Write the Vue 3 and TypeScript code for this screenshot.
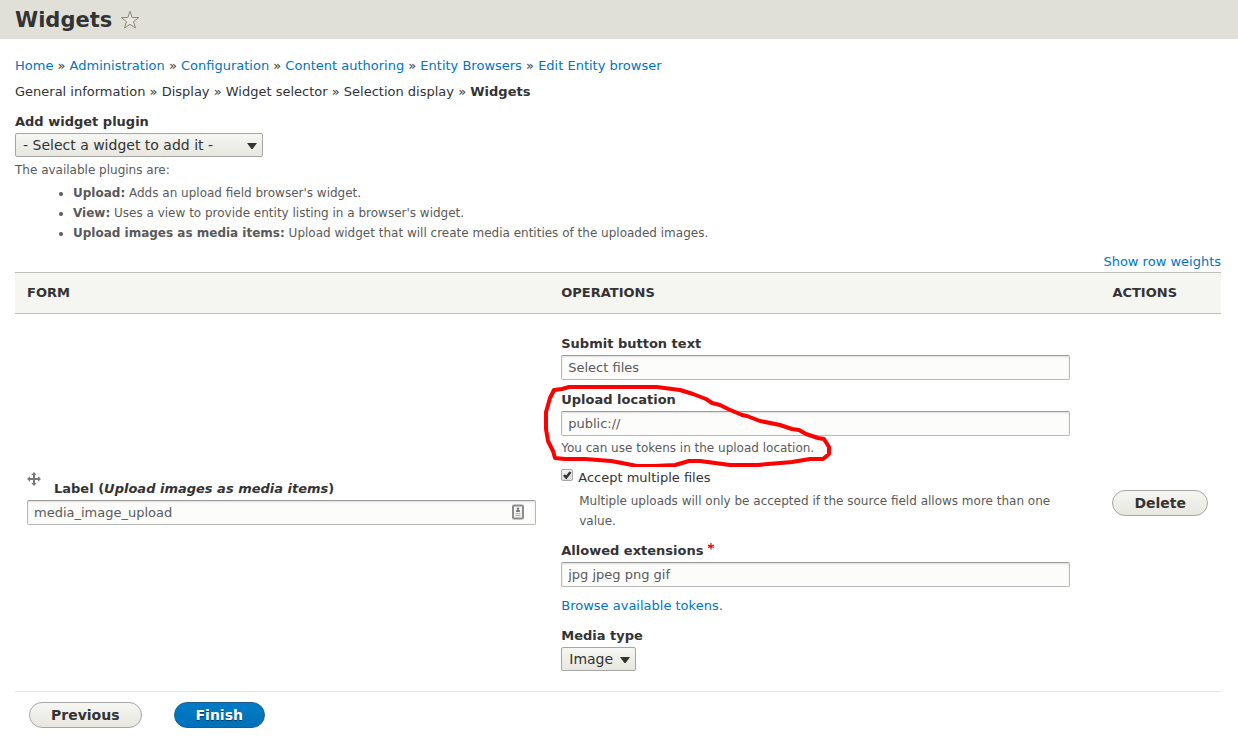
<script setup lang="ts">
import { ref } from 'vue'

interface Plugin {
  name: string
  summary: string
}

const crumbs: string[] = [
  'Home',
  'Administration',
  'Configuration',
  'Content authoring',
  'Entity Browsers',
  'Edit Entity browser',
]

const steps: string[] = ['General information', 'Display', 'Widget selector', 'Selection display']

const plugins: Plugin[] = [
  { name: 'Upload', summary: "Adds an upload field browser's widget." },
  { name: 'View', summary: "Uses a view to provide entity listing in a browser's widget." },
  {
    name: 'Upload images as media items',
    summary: 'Upload widget that will create media entities of the uploaded images.',
  },
]

const widgetPlugin = ref('')
const label = ref('media_image_upload')
const submitText = ref('Select files')
const uploadLocation = ref('public://')
const multiple = ref(true)
const extensions = ref('jpg jpeg png gif')
const mediaType = ref('image')
</script>

<template>
  <div class="page">
    <header class="header">
      <h1>Widgets</h1>
      <button type="button" class="star" aria-label="Add to shortcuts">
        <svg width="20" height="20" viewBox="0 0 20 20">
          <path
            d="M10 1.2 L12.1 7.5 L18.7 7.6 L13.5 11.6 L15.4 18 L10 14.3 L4.6 18 L6.5 11.6 L1.3 7.6 L7.9 7.5 Z"
            fill="#e8e8e1"
            stroke="#8b8973"
            stroke-width="1"
            stroke-linejoin="round"
          />
        </svg>
      </button>
    </header>

    <main class="content">
      <nav class="trail" aria-label="Breadcrumb">
        <template v-for="(crumb, i) in crumbs" :key="crumb">
          <template v-if="i > 0"> » </template><a href="#">{{ crumb }}</a>
        </template>
      </nav>
      <div class="trail steps">
        <template v-for="step in steps" :key="step">{{ step }} » </template><strong>Widgets</strong>
      </div>

      <form @submit.prevent>
        <div class="item">
          <label for="plugin">Add widget plugin</label>
          <span class="select wide">
            <select id="plugin" v-model="widgetPlugin">
              <option value="">- Select a widget to add it -</option>
              <option v-for="p in plugins" :key="p.name" :value="p.name">{{ p.name }}</option>
            </select>
            <svg width="10" height="6" viewBox="0 0 10 6"><path d="M0 0H10L5.6 6H4.4Z" fill="#333" /></svg>
          </span>
          <div class="description">
            The available plugins are:
            <ul>
              <li v-for="p in plugins" :key="p.name"><strong>{{ p.name }}:</strong> {{ p.summary }}</li>
            </ul>
          </div>
        </div>

        <div class="weights"><a href="#">Show row weights</a></div>

        <table>
          <colgroup>
            <col class="col-form" />
            <col class="col-operations" />
            <col />
          </colgroup>
          <thead>
            <tr>
              <th scope="col">Form</th>
              <th scope="col">Operations</th>
              <th scope="col">Actions</th>
            </tr>
          </thead>
          <tbody>
            <tr>
              <td>
                <div class="form-cell">
                  <div class="label-row">
                    <a href="#" class="handle" aria-label="Drag to re-order">
                      <svg width="14" height="14" viewBox="0 0 14 14">
                        <path
                          d="M7 0L9.7 3H8V6H11V4.3L14 7L11 9.7V8H8V11H9.7L7 14L4.3 11H6V8H3V9.7L0 7L3 4.3V6H6V3H4.3Z"
                          fill="#787878"
                        />
                      </svg>
                    </a>
                    <label for="label">Label (<em>Upload images as media items</em>)</label>
                  </div>
                  <div class="field">
                    <input id="label" v-model="label" type="text" />
                    <svg class="fill-icon" width="12" height="16" viewBox="0 0 12 16">
                      <rect x="1" y="1.5" width="10" height="13" rx="1" fill="#f4f4f4" stroke="#8c8c8c" stroke-width="2" />
                      <circle cx="6" cy="4.8" r="1.2" fill="#777" />
                      <path d="M4.5 6H7.5L8 8H4Z" fill="#777" />
                      <path d="M3.5 9.5H8.5M3.5 11.5H8.5" stroke="#aaa" />
                    </svg>
                  </div>
                </div>
              </td>
              <td>
                <div class="item">
                  <label for="submit-text">Submit button text</label>
                  <input id="submit-text" v-model="submitText" type="text" />
                </div>
                <div class="item marked">
                  <label for="location">Upload location</label>
                  <input id="location" v-model="uploadLocation" type="text" />
                  <div class="description">You can use tokens in the upload location.</div>
                  <svg class="mark" width="290" height="84" viewBox="0 0 290 84">
                    <path
                      d="M12 7L20 6L27 4L60 4L115 4L130 6L138 7L151 11L164 16L170 20L178 22L186 26L200 32L205 33L218 38L238 42L250 46L257 47L264 51L276 55L282 56L287 64L287 71L281 76L268 76L250 79L215 82L188 82L158 78L147 78L133 82L112 83L95 83L80 80L69 78L43 76L23 76L13 75L11 68L6 58L4 46L4 29L8 15L12 7"
                      fill="none"
                      stroke="#f00"
                      stroke-width="4"
                      stroke-linejoin="round"
                      stroke-linecap="round"
                    />
                  </svg>
                </div>
                <div class="item">
                  <div class="check">
                    <input id="multiple" v-model="multiple" type="checkbox" />
                    <svg v-if="multiple" width="12" height="12" viewBox="0 0 12 12">
                      <path d="M3 6L5.2 8.6L9.5 3" fill="none" stroke="#333" stroke-width="2.4" />
                    </svg>
                    <label for="multiple">Accept multiple files</label>
                  </div>
                  <div class="description indented">
                    Multiple uploads will only be accepted if the source field allows more than one value.
                  </div>
                </div>
                <div class="item extensions">
                  <label for="extensions">
                    Allowed extensions
                    <svg width="6" height="7" viewBox="0 0 6 7">
                      <path d="M3 0V6.4M0 2L6 4.4M6 2L0 4.4" stroke="#e00" stroke-width="1.2" fill="none" />
                    </svg>
                  </label>
                  <input id="extensions" v-model="extensions" type="text" required />
                </div>
                <div class="item tokens"><a href="#">Browse available tokens.</a></div>
                <div class="item">
                  <label for="media-type">Media type</label>
                  <span class="select">
                    <select id="media-type" v-model="mediaType">
                      <option value="image">Image</option>
                    </select>
                    <svg width="10" height="6" viewBox="0 0 10 6"><path d="M0 0H10L5.6 6H4.4Z" fill="#333" /></svg>
                  </span>
                </div>
              </td>
              <td><button type="button" class="button">Delete</button></td>
            </tr>
          </tbody>
        </table>

        <div class="actions">
          <button type="button" class="button">Previous</button>
          <button type="submit" class="button primary">Finish</button>
        </div>
      </form>
    </main>
  </div>
</template>

<style>
body {
  margin: 0;
  background: #fff;
}
</style>

<style scoped>
* {
  box-sizing: border-box;
}
.page {
  color: #333;
  font: 13px/20px 'DejaVu Sans', sans-serif;
}
a {
  color: #0074bd;
  text-decoration: none;
}
.header {
  display: flex;
  align-items: center;
  gap: 8px;
  height: 39px;
  padding: 0 15px;
  background: #e0e0d8;
}
h1 {
  margin: 0;
  font-size: 21px;
  line-height: 26px;
}
.star {
  display: flex;
  padding: 0;
  border: 0;
  background: none;
}
.content {
  padding: 17px 17px 20px 15px;
}
.steps {
  margin: 6px 0 10px;
}
.item label {
  display: block;
  font-weight: bold;
}
.item > label {
  margin-bottom: 1px;
}
.description {
  padding-top: 2px;
  color: #595959;
  font-size: 12px;
}
ul {
  margin: 3px 0 9px;
  padding-left: 58px;
}
.select {
  position: relative;
  display: block;
  width: 75px;
}
.select.wide {
  width: 248px;
  margin-bottom: 1px;
}
select {
  display: block;
  width: 100%;
  height: 24px;
  padding: 0 7px;
  border: 1px solid #a6a6a6;
  border-radius: 2px;
  appearance: none;
  background: linear-gradient(#f6f6f3, #e7e7df);
  color: #333;
  font: 14px/20px 'DejaVu Sans', sans-serif;
}
.select svg {
  position: absolute;
  top: 10px;
  right: 6px;
  pointer-events: none;
}
.weights {
  text-align: right;
}
table {
  width: 100%;
  border-collapse: separate;
  border-spacing: 0;
  table-layout: fixed;
}
.col-form {
  width: 44.3%;
}
.col-operations {
  width: 45.7%;
}
th {
  padding: 10px 12px;
  border: solid #bfbfba;
  border-width: 1px 0;
  background: #f5f5f2;
  text-align: left;
  text-transform: uppercase;
}
td {
  padding: 20px 12px;
  border-bottom: 1px solid #e6e4df;
  vertical-align: middle;
}
td .item + .item {
  margin-top: 10px;
}
.form-cell {
  padding-bottom: 8px;
}
.label-row {
  display: flex;
  align-items: flex-start;
  gap: 13px;
  margin-bottom: 1px;
}
.label-row label {
  padding-top: 7px;
  font-weight: bold;
}
.handle {
  display: flex;
}
.field {
  position: relative;
  max-width: 509px;
}
input[type='text'] {
  display: block;
  width: 100%;
  max-width: 509px;
  height: 25px;
  padding: 0 6px;
  border: 1px solid #b8b8b8;
  border-top-color: #999;
  border-radius: 2px;
  background: #fcfcfa;
  box-shadow: inset 0 1px 2px rgba(0, 0, 0, 0.125);
  color: #595959;
  font: 13px/20px 'DejaVu Sans', sans-serif;
}
.fill-icon {
  position: absolute;
  top: 4px;
  right: 12px;
}
.marked {
  position: relative;
}
.mark {
  position: absolute;
  top: -7px;
  left: -19px;
  pointer-events: none;
}
.check {
  position: relative;
  display: flex;
  align-items: flex-start;
  gap: 5px;
}
.check label {
  font-weight: normal;
}
.check input {
  width: 12px;
  height: 12px;
  margin: 1px 0 0;
  border: 1px solid #a6a6a6;
  border-radius: 2px;
  appearance: none;
  background: linear-gradient(#f2f2f2, #dedede);
}
.check svg {
  position: absolute;
  top: 1px;
  left: 0;
  pointer-events: none;
}
.indented {
  padding: 3px 0 0 18px;
}
.extensions label svg {
  margin-bottom: 5px;
}
td .item + .tokens {
  margin-top: 9px;
}
.button {
  height: 26px;
  padding: 0 21px;
  border: 1px solid #a6a6a6;
  border-radius: 13px;
  background: linear-gradient(#f6f6f3, #e7e7df);
  color: #333;
  font: bold 14px/20px 'DejaVu Sans', sans-serif;
}
.primary {
  border-color: #1e5c90;
  background: linear-gradient(#007bc6, #0071b8);
  color: #fff;
  text-shadow: 0 1px 1px rgba(0, 0, 0, 0.5);
}
.actions {
  display: flex;
  gap: 32px;
  padding: 10px 14px;
}
</style>
